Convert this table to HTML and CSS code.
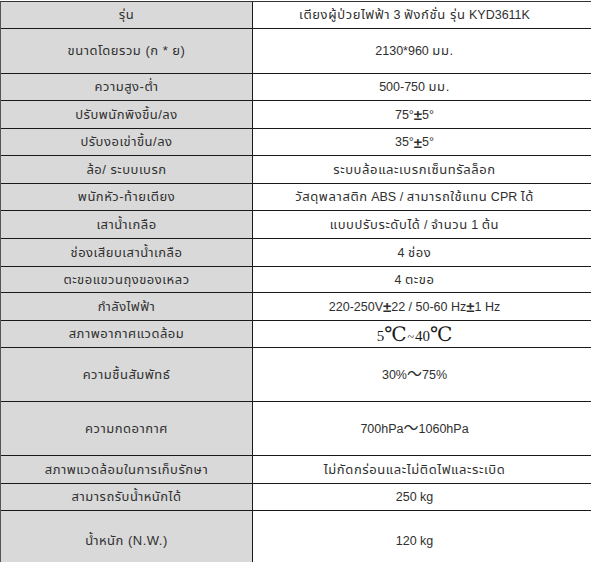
FILE: index.html
```html
<!DOCTYPE html>
<html lang="th">
<head>
<meta charset="utf-8">
<title>สเปค</title>
<link rel="stylesheet" href="styles.css">
</head>
<body>
<div class="spec">
  <div class="k">รุ่น</div><div class="v"><span class="th">เตียงผู้ป่วยไฟฟ้า</span>&nbsp;3&nbsp;<span class="th">ฟังก์ชั่น รุ่น</span>&nbsp;KYD3611K</div>
  <div class="k">ขนาดโดยรวม (ก * ย)</div><div class="v">2130*960&nbsp;<span class="th">มม.</span></div>
  <div class="k">ความสูง-ต่ำ</div><div class="v">500-750&nbsp;<span class="th">มม.</span></div>
  <div class="k">ปรับพนักพิงขึ้น/ลง</div><div class="v">75°<span class="pm">±</span>5°</div>
  <div class="k">ปรับงอเข่าขึ้น/ลง</div><div class="v">35°<span class="pm">±</span>5°</div>
  <div class="k">ล้อ/ ระบบเบรก</div><div class="v"><span class="th">ระบบล้อและเบรกเซ็นทรัลล็อก</span></div>
  <div class="k">พนักหัว-ท้ายเตียง</div><div class="v"><span class="th">วัสดุพลาสติก</span>&nbsp;ABS /&nbsp;<span class="th">สามารถใช้แทน</span>&nbsp;CPR&nbsp;<span class="th">ได้</span></div>
  <div class="k">เสาน้ำเกลือ</div><div class="v"><span class="th">แบบปรับระดับได้</span>&nbsp;/&nbsp;<span class="th">จำนวน</span>&nbsp;1&nbsp;<span class="th">ต้น</span></div>
  <div class="k">ช่องเสียบเสาน้ำเกลือ</div><div class="v">4&nbsp;<span class="th">ช่อง</span></div>
  <div class="k">ตะขอแขวนถุงของเหลว</div><div class="v">4&nbsp;<span class="th">ตะขอ</span></div>
  <div class="k">กำลังไฟฟ้า</div><div class="v">220-250V<span class="pm">±</span>22 / 50-60 Hz<span class="pm">±</span>1 Hz</div>
  <div class="k">สภาพอากาศแวดล้อม</div><div class="v"><span class="serif">5<span class="deg">℃</span><span class="tl">~</span>40<span class="deg">℃</span></span></div>
  <div class="k">ความชื้นสัมพัทธ์</div><div class="v">30%<span class="wave">～</span>75%</div>
  <div class="k">ความกดอากาศ</div><div class="v">700hPa<span class="wave">～</span>1060hPa</div>
  <div class="k">สภาพแวดล้อมในการเก็บรักษา</div><div class="v"><span class="th">ไม่กัดกร่อนและไม่ติดไฟและระเบิด</span></div>
  <div class="k">สามารถรับน้ำหนักได้</div><div class="v">250 kg</div>
  <div class="k last">น้ำหนัก (N.W.)</div><div class="v last">120 kg</div>
</div>
</body>
</html>
```
FILE: styles.css
```css
html, body {
  margin: 0;
  padding: 0;
  background: #fff;
}
body {
  font-family: "Liberation Sans", "Noto Sans Thai", "Noto Sans Thai UI", "Loma", "Garuda", "Noto Sans", sans-serif;
  font-size: 12.5px;
  color: #303030;
}
.spec {
  margin-top: 1px;
  display: grid;
  grid-template-columns: 252px 1fr;
  grid-template-rows: 27px 45px 27px 28px 27px 28px 27px 28px 28px 26px 28px 27px 54px 54px 28px 27px 60px;
  border-top: 1px solid #333;
  border-left: 1px solid #555;
}
.k, .v {
  box-sizing: border-box;
  display: flex;
  align-items: center;
  justify-content: center;
  border-bottom: 1px solid #1a1a1a;
  white-space: nowrap;
}
.k {
  background: #d9d9d9;
  border-right: 1px solid #1a1a1a;
  font-size: 13px;
  letter-spacing: 0.5px;
}
.v {
  padding-right: 15px;
}
.th {
  font-size: 13px;
  letter-spacing: 0.6px;
}
.pm {
  font-size: 15px;
  font-weight: 700;
  line-height: 1;
}
.last {
  border-bottom: none;
}
.serif {
  font-family: "Liberation Serif", "DejaVu Serif", serif;
  font-size: 15px;
  color: #1a1a1a;
  display: flex;
  align-items: baseline;
  line-height: 1;
}
.deg {
  font-size: 20px;
}
.tl {
  font-size: 12px;
  padding: 0 1px;
}
.wave {
  font-family: "Noto Sans CJK SC", sans-serif;
  font-size: 15px;
  line-height: 1;
  position: relative;
  top: -2px;
}
```
